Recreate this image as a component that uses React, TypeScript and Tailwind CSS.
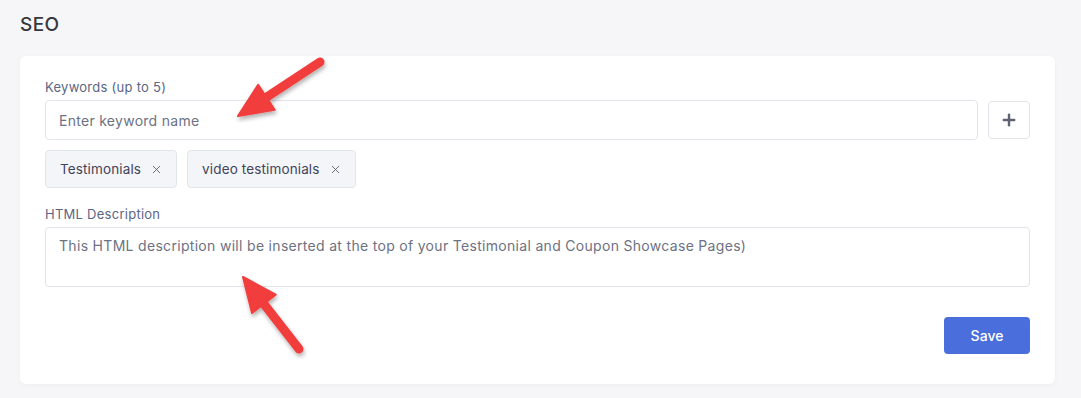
import { X, Plus } from 'lucide-react'

const font = { fontFamily: 'Inter, "Noto Sans", sans-serif' }

function Arrow({ x1, y1, x2, y2 }: { x1: number; y1: number; x2: number; y2: number }) {
  // shaft from tail (x1,y1) to tip (x2,y2)
  const dx = x2 - x1
  const dy = y2 - y1
  const len = Math.sqrt(dx * dx + dy * dy)
  const ux = dx / len
  const uy = dy / len
  const px = -uy
  const py = ux
  const headL = 34
  const headW = 15
  const bx = x2 - ux * headL
  const by = y2 - uy * headL
  const head = `${x2},${y2} ${bx + px * headW},${by + py * headW} ${bx - px * headW},${by - py * headW}`
  return (
    <g>
      <line x1={x1} y1={y1} x2={bx + ux * 4} y2={by + uy * 4} stroke="#f23d3d" strokeWidth={9} strokeLinecap="round" />
      <polygon points={head} fill="#f23d3d" stroke="#f23d3d" strokeWidth={2} strokeLinejoin="round" />
    </g>
  )
}

function Tag({ label }: { label: string }) {
  return (
    <div className="flex h-[38px] items-center gap-[9px] rounded-[4px] border border-[#e3e5ec] bg-[#f4f5f8] pl-[14px] pr-[13px] text-[13.5px] tracking-[0.01em] text-[#41445a]">
      <span>{label}</span>
      <X size={13} strokeWidth={1.6} className="text-[#55586a]" />
    </div>
  )
}

export default function App() {
  return (
    <div className="relative h-[398px] w-[1081px] overflow-hidden bg-[#f6f6f9] pl-[20px] pr-[26px]" style={font}>
      <div className="pt-[14px] text-[19px] font-medium leading-[22px] tracking-[0.02em] text-[#36373f]">SEO</div>

      <div className="mt-[20px] rounded-[6px] bg-white px-[25px] pb-[30px] pt-[22px] shadow-[0_1px_4px_rgba(0,0,0,0.04)]">
        <div className="text-[13px] leading-[18px] tracking-[0.02em] text-[#5b6584]">Keywords (up to 5)</div>
        <div className="mt-[4px] flex gap-[10px]">
          <input
            placeholder="Enter keyword name"
            className="h-[40px] flex-1 rounded-[4px] border border-[#e2e4ea] bg-white px-[13px] text-[14px] tracking-[0.02em] text-[#333] outline-none placeholder:text-[#6d7283]"
          />
          <button className="mt-[1px] flex h-[38px] w-[42px] items-center justify-center rounded-[4px] border border-[#e2e4ea] bg-white">
            <Plus size={18} strokeWidth={3.2} className="text-[#5e6273]" />
          </button>
        </div>

        <div className="mt-[10px] flex gap-[10px]">
          <Tag label="Testimonials" />
          <Tag label="video testimonials" />
        </div>

        <div className="mt-[17px] text-[13px] leading-[18px] tracking-[0.02em] text-[#5b6584]">HTML Description</div>
        <textarea
          rows={2}
          placeholder="This HTML description will be inserted at the top of your Testimonial and Coupon Showcase Pages)"
          className="mt-[4px] block h-[60px] w-full resize-none rounded-[4px] border border-[#e2e4ea] bg-white px-[13px] py-[8px] text-[14px] leading-[20px] tracking-[0.022em] outline-none placeholder:text-[#6d7283]"
        />

        <div className="mt-[30px] flex justify-end">
          <button className="h-[37px] w-[86px] rounded-[4px] bg-[#4a6edb] text-[14px] font-medium text-white">Save</button>
        </div>
      </div>

      <svg className="pointer-events-none absolute left-0 top-0" width={1081} height={398}>
        <defs>
          <filter id="sh" x="-20%" y="-20%" width="140%" height="140%">
            <feDropShadow dx="1" dy="3" stdDeviation="2" floodColor="#000" floodOpacity="0.3" />
          </filter>
        </defs>
        <g filter="url(#sh)">
          <Arrow x1={320} y1={62} x2={238} y2={116} />
          <Arrow x1={299} y1={349} x2={243} y2={277} />
        </g>
      </svg>
    </div>
  )
}
